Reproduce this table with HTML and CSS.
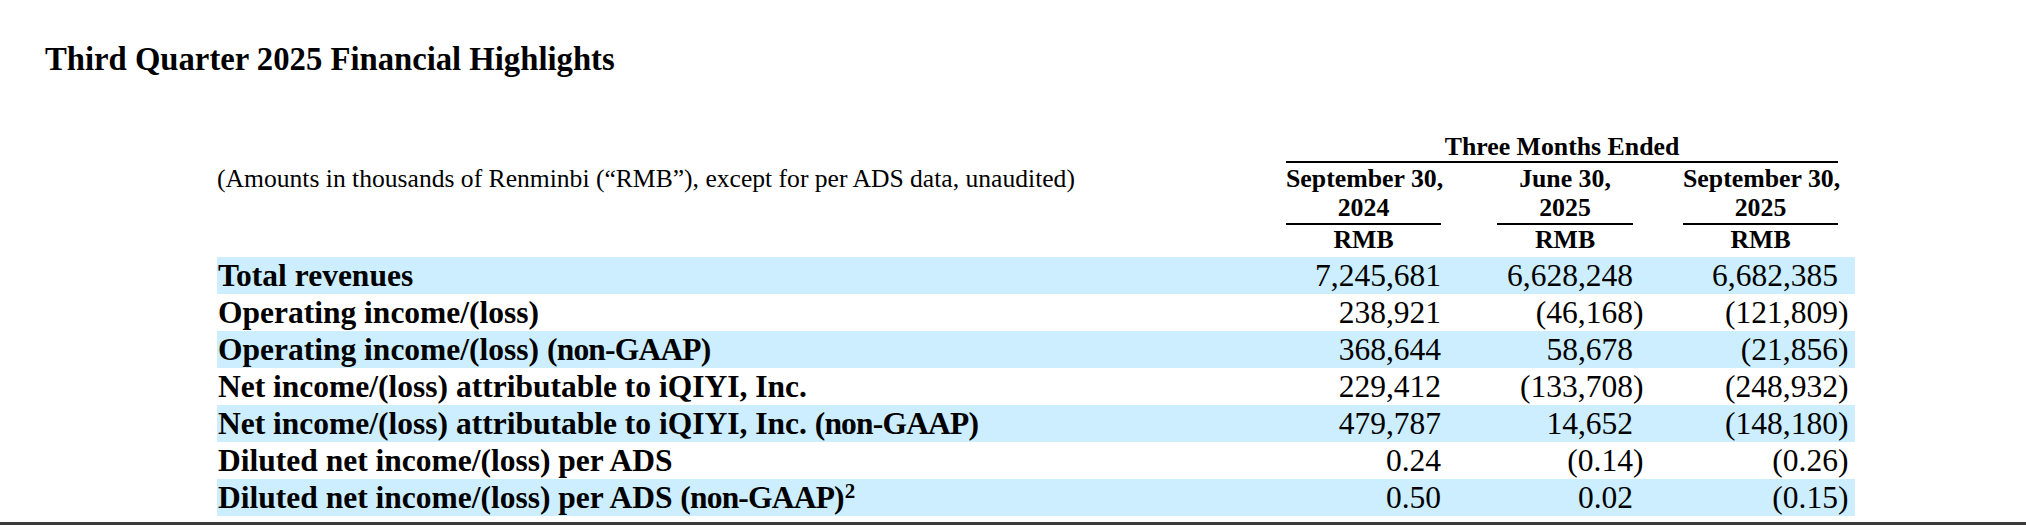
FILE: index.html
```html
<!DOCTYPE html>
<html lang="en">
<head>
<meta charset="utf-8">
<title>Third Quarter 2025 Financial Highlights</title>
<link rel="stylesheet" href="styles.css">
</head>
<body>
<main class="page">
  <h1 class="title">Third Quarter 2025 Financial Highlights</h1>

  <section class="fin">
    <div class="fin-head">
      <div class="group">Three Months Ended</div>
      <div class="note">(Amounts in thousands of Renminbi (“RMB”), except for per ADS data, unaudited)</div>
      <div class="date c1"><div class="rule w155">September 30,<br>2024</div></div>
      <div class="date c2"><div class="rule w136">June 30,<br>2025</div></div>
      <div class="date c3"><div class="rule w155">September 30,<br>2025</div></div>
      <div class="cur c1"><div class="w155">RMB</div></div>
      <div class="cur c2"><div class="w136">RMB</div></div>
      <div class="cur c3"><div class="w155">RMB</div></div>
    </div>

    <div class="fin-body">
      <div class="row shade">
        <div class="label">Total revenues</div>
        <div class="num">7,245,681</div>
        <div class="num">6,628,248</div>
        <div class="num">6,682,385</div>
      </div>
      <div class="row">
        <div class="label">Operating income/(loss)</div>
        <div class="num">238,921</div>
        <div class="num">(46,168<span class="rp">)</span></div>
        <div class="num">(121,809<span class="rp">)</span></div>
      </div>
      <div class="row shade">
        <div class="label">Operating income/(loss) <span class="ng">(non-GAAP)</span></div>
        <div class="num">368,644</div>
        <div class="num">58,678</div>
        <div class="num">(21,856<span class="rp">)</span></div>
      </div>
      <div class="row">
        <div class="label">Net income/(loss) attributable to iQIYI, Inc.</div>
        <div class="num">229,412</div>
        <div class="num">(133,708<span class="rp">)</span></div>
        <div class="num">(248,932<span class="rp">)</span></div>
      </div>
      <div class="row shade">
        <div class="label">Net income/(loss) attributable to iQIYI, Inc. <span class="ng">(non-GAAP)</span></div>
        <div class="num">479,787</div>
        <div class="num">14,652</div>
        <div class="num">(148,180<span class="rp">)</span></div>
      </div>
      <div class="row">
        <div class="label">Diluted net income/(loss) per ADS</div>
        <div class="num">0.24</div>
        <div class="num">(0.14<span class="rp">)</span></div>
        <div class="num">(0.26<span class="rp">)</span></div>
      </div>
      <div class="row shade">
        <div class="label">Diluted net income/(loss) per ADS <span class="ng">(non-GAAP)</span><sup class="fn">2</sup></div>
        <div class="num">0.50</div>
        <div class="num">0.02</div>
        <div class="num">(0.15<span class="rp">)</span></div>
      </div>
    </div>
  </section>
</main>
<div class="bottom-bar"></div>
</body>
</html>
```

FILE: styles.css
```css
html, body {
  margin: 0;
  padding: 0;
  background: #ffffff;
  color: #000000;
  font-family: "Liberation Serif", "Times New Roman", serif;
}

.page {
  padding-top: 41px;
}

.title {
  margin: 0;
  padding-left: 45px;
  font-size: 32.7px;
  line-height: 37px;
  font-weight: 700;
}

.fin {
  margin-top: 54px;
  margin-left: 217px;
}

.fin-head,
.row {
  display: grid;
  grid-template-columns: 1069px 155px 192px 205px;
}

.fin-head {
  font-size: 25.8px;
  line-height: 29px;
  font-weight: 700;
  width: 1621px;
}

.group {
  grid-column: 2 / 5;
  grid-row: 1;
  text-align: center;
  border-bottom: 2px solid #000;
  white-space: nowrap;
}

.note {
  grid-column: 1;
  grid-row: 2;
  font-weight: 400;
  font-size: 25.6px;
  padding-top: 1px;
  white-space: nowrap;
}

.c1 { grid-column: 2; }
.c2 { grid-column: 3; }
.c3 { grid-column: 4; }

.date {
  grid-row: 2;
  padding-top: 1px;
}

.cur {
  grid-row: 3;
}

.date > div,
.cur > div {
  margin-left: auto;
  text-align: center;
  white-space: nowrap;
}

.rule {
  border-bottom: 2px solid #000;
  padding-bottom: 1px;
}

.w155 { width: 155px; }
.w136 { width: 136px; }

.fin-body {
  margin-top: 3px;
}

.row {
  width: 1621px;
  padding-right: 17px;
  height: 37px;
  font-size: 31.5px;
  line-height: 37px;
}

.row.shade {
  background: #cceeff;
}

.label {
  font-weight: 700;
  padding-left: 1px;
  white-space: nowrap;
}

.ng {
  letter-spacing: -0.8px;
}

.num {
  text-align: right;
  white-space: nowrap;
}

.rp {
  margin-right: -0.333em;
}

.fn {
  font-size: 21px;
  font-weight: 700;
  line-height: 0;
  vertical-align: 10px;
  margin-left: 1px;
}

.bottom-bar {
  margin-top: 6px;
  height: 3px;
  background: #3b3b3b;
}
```
